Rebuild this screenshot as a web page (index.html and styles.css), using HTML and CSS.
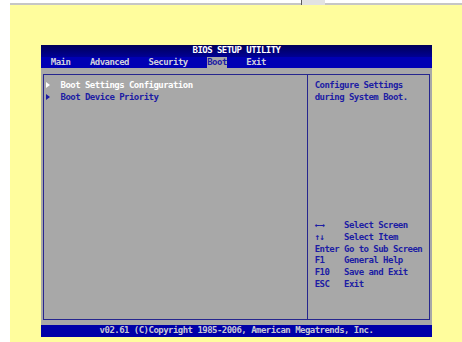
FILE: index.html
```html
<!DOCTYPE html>
<html lang="en">
<head>
  <meta charset="UTF-8" />
  <meta name="viewport" content="width=device-width, initial-scale=1.0"/>
  <title>BIOS Setup Utility – Boot</title>
  <link rel="stylesheet" href="styles.css">
</head>
<body>
  <div class="topbar">
    <span class="tab"></span>
  </div>

  <div class="page">
    <div class="screen">
      <div class="title">BIOS SETUP UTILITY</div>
      <nav class="menu">  Main    Advanced    Security    <span class="active">Boot</span>    Exit</nav>

      <div class="body">
        <div class="box">
          <div class="items">
            <div class="item selected"><i class="arrow"></i>Boot Settings Configuration</div>
            <div class="item"><i class="arrow"></i>Boot Device Priority</div>
          </div>

          <div class="help">
            <p>Configure Settings</p>
            <p>during System Boot.</p>

            <dl class="keys">
              <dt>←→</dt><dd>Select Screen</dd>
              <dt>↑↓</dt><dd>Select Item</dd>
              <dt>Enter</dt><dd>Go to Sub Screen</dd>
              <dt>F1</dt><dd>General Help</dd>
              <dt>F10</dt><dd>Save and Exit</dd>
              <dt>ESC</dt><dd>Exit</dd>
            </dl>
          </div>
        </div>
      </div>

      <div class="footer">v02.61 (C)Copyright 1985-2006, American Megatrends, Inc.</div>
    </div>
  </div>
</body>
</html>
```

FILE: styles.css
```css
:root {
  --col: 4.8875px;
  --row: 11.68px;
  --ink: #1c1ca4;
  --line: #26268e;
}

body {
  margin: 0;
  background-color: #fff;
  font-family: "DejaVu Sans Mono", monospace;
}

.topbar {
  display: flex;
  align-items: flex-start;
  height: 3px;
  margin-left: 10px;
  border-bottom: 2px solid #c6c6c6;
}

.tab {
  margin-left: 291px;
  width: 23px;
  height: 5px;
  border-left: 1px solid #5a5a5a;
  background: #e2e2e2;
}

.page {
  height: 337px;
  margin-left: 10px;
  padding: 40px 0 0 31px;
  box-sizing: border-box;
  background: #fffd9d;
}

/* 80x25 text grid: 9px mono squeezed to the column pitch */
.screen {
  width: 391px;
  font-size: 9px;
  font-weight: bold;
  letter-spacing: -0.53px;
  line-height: var(--row);
}

.title {
  height: var(--row);
  text-align: center;
  color: #fff;
  background: linear-gradient(#000058, #000094);
}

.menu {
  height: var(--row);
  white-space: pre;
  background: #0000b4;
  color: #d0d0dc;
}

.menu .active {
  display: inline-block;
  background: #a8a8a8;
  color: var(--ink);
}

.body {
  display: flex;
  height: calc(var(--row) * 22);
  padding: calc(var(--row) / 2 - 0.5px) calc(var(--col) / 2 - 0.5px);
  box-sizing: border-box;
  background: #a8a8a8;
}

.box {
  flex: 1;
  display: grid;
  grid-template-columns: calc(var(--col) * 54 - 1px) 1fr;
  border: 1px solid var(--line);
}

.items {
  padding: calc(var(--row) / 2 - 0.5px) 0 0 calc(var(--col) / 2 - 0.5px);
  color: var(--ink);
}

.item.selected {
  color: #fff;
}

.arrow {
  display: inline-block;
  border-left: 4px solid currentColor;
  border-top: 3px solid transparent;
  border-bottom: 3px solid transparent;
  margin-right: calc(var(--col) * 3 - 4px);
}

.help {
  padding: calc(var(--row) / 2 - 0.5px) 0 0 calc(var(--col) * 1.5 - 0.5px);
  border-left: 1px solid var(--line);
  color: var(--ink);
}

.help p {
  margin: 0;
}

.keys {
  display: grid;
  grid-template-columns: calc(var(--col) * 6) auto;
  margin: calc(var(--row) * 10) 0 0;
}

.keys dd {
  margin: 0;
}

.footer {
  height: var(--row);
  text-align: center;
  background: #0000a8;
  color: #c8c8d4;
}
```
